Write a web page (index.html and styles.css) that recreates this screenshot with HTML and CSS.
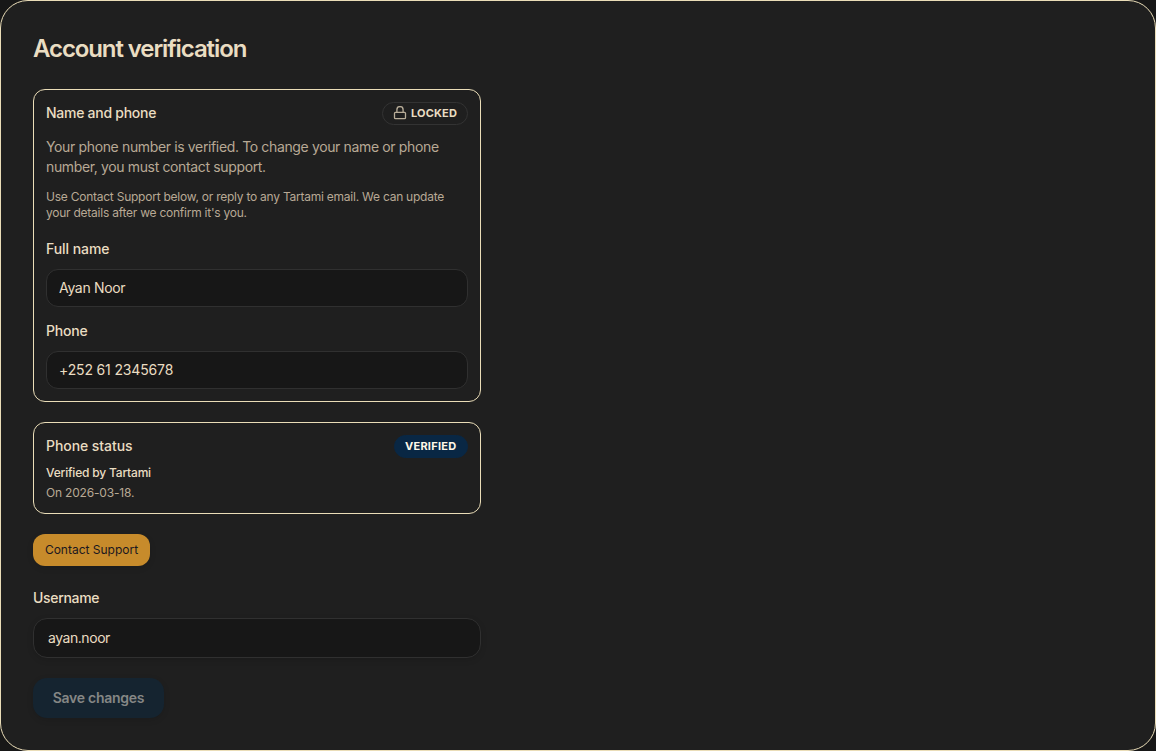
FILE: index.html
```html
<!DOCTYPE html>
<html lang="en">
<head>
    <meta charset="UTF-8">
    <meta name="viewport" content="width=device-width, initial-scale=1.0">
    <title>Account verification</title>
    <link rel="stylesheet" href="styles.css">
</head>
<body>
    <main class="panel">
        <h1>Account verification</h1>

        <form class="account-form">
            <section class="card">
                <div class="card-header">
                    <h2 class="name-title">Name and phone</h2>
                    <span class="badge badge-locked">
                        <svg class="lock-icon" viewBox="0 0 14 14" fill="none" stroke="currentColor" stroke-width="1.3" stroke-linecap="round" stroke-linejoin="round">
                            <rect x="1.5" y="6.3" width="11" height="6.4" rx="1"/>
                            <path d="M3.9 6.2V3.7a3.1 3.1 0 0 1 6.2 0v2.5"/>
                        </svg>
                        LOCKED
                    </span>
                </div>
                <p class="description">Your phone number is verified. To change your name or phone<br>number, you must contact support.</p>
                <p class="hint">Use Contact Support below, or reply to any Tartami email. We can update<br>your details after we confirm it's you.</p>

                <div class="form-group">
                    <label class="label-name" for="fullName">Full name</label>
                    <input type="text" class="input-name" id="fullName" value="Ayan Noor" readonly>
                </div>
                <div class="form-group">
                    <label for="phone">Phone</label>
                    <input type="text" class="input-phone" id="phone" value="+252 61 2345678" readonly>
                </div>
            </section>

            <section class="card">
                <div class="card-header">
                    <h2>Phone status</h2>
                    <span class="badge badge-verified">VERIFIED</span>
                </div>
                <p class="verified-by">Verified by Tartami</p>
                <p class="verified-date">On 2026-03-18.</p>
            </section>

            <button type="button" class="support-button">Contact Support</button>

            <div class="form-group username-group">
                <label class="label-username" for="username">Username</label>
                <input type="text" id="username" value="ayan.noor">
            </div>

            <button type="submit" class="save-button" disabled>Save changes</button>
        </form>
    </main>
</body>
</html>
```
FILE: styles.css
```css
* {
    box-sizing: border-box;
}

body {
    margin: 0;
    background-color: #171717;
    color: #eaddc2;
    font-family: Inter, "Liberation Sans", sans-serif;
    font-size: 14px;
    line-height: 20px;
}

h1, h2, p {
    margin: 0;
}

.panel {
    height: 751px;
    padding: 32px;
    background-color: #1f1f1f;
    border: 1px solid #eaddb8;
    border-radius: 28px;
}

h1 {
    font-size: 24px;
    font-weight: 600;
    line-height: 32px;
    letter-spacing: -1.1px;
}

.account-form {
    display: flex;
    flex-direction: column;
    align-items: flex-start;
    gap: 20px;
    width: 448px;
    margin-top: 24px;
}

.card {
    width: 100%;
    padding: 12px;
    border: 1px solid #eaddb8;
    border-radius: 12px;
}

.card-header {
    display: flex;
    justify-content: space-between;
    align-items: center;
    height: 23px;
}

h2 {
    padding-bottom: 2px;
    font-size: 14px;
    font-weight: 500;
    line-height: 20px;
    letter-spacing: -0.07px;
}

.name-title {
    letter-spacing: -0.27px;
}

.badge {
    display: flex;
    align-items: center;
    height: 23px;
    padding: 0 10px 1px;
    border: 1px solid #333;
    border-radius: 12px;
    font-size: 11px;
    font-weight: 700;
    line-height: 16px;
    letter-spacing: 0.17px;
}

.badge-locked {
    gap: 4px;
    width: 86px;
}

.badge-verified {
    width: 74px;
    background-color: #092744;
    border-color: #092744;
    color: #fff8e8;
    letter-spacing: 0.25px;
}

.lock-icon {
    width: 14px;
    height: 14px;
    flex: none;
    color: #b8ad99;
}

.description {
    margin-top: 12px;
    color: #b8a995;
    letter-spacing: -0.36px;
}

.hint {
    margin-top: 12px;
    color: #b8a995;
    font-size: 12px;
    line-height: 16px;
    letter-spacing: -0.24px;
}

.form-group {
    width: 100%;
    margin-top: 14px;
}

.hint + .form-group {
    margin-top: 18px;
}

label {
    display: block;
    font-weight: 500;
    line-height: 20px;
    letter-spacing: -0.2px;
}

.label-name {
    letter-spacing: -0.06px;
}

.label-username {
    letter-spacing: -0.32px;
}

input {
    display: block;
    width: 100%;
    height: 38px;
    margin-top: 10px;
    padding: 0 12px 2px;
    background-color: #171717;
    border: 1px solid #303030;
    border-radius: 12px;
    color: #eaddc2;
    font-family: inherit;
    font-size: 14px;
    letter-spacing: -0.45px;
    outline: none;
}

.input-name {
    letter-spacing: -0.33px;
}

.input-phone {
    letter-spacing: -0.15px;
}

.verified-by, .verified-date {
    font-size: 12px;
    line-height: 16px;
    letter-spacing: -0.19px;
}

.verified-by {
    margin-top: 7px;
    font-weight: 500;
}

.verified-date {
    margin-top: 4px;
    color: #b8a995;
}

button {
    border: none;
    font-family: inherit;
    box-shadow: 0 2px 6px rgba(0, 0, 0, 0.12);
}

.support-button {
    width: 117px;
    height: 32px;
    padding: 0 0 2px;
    background-color: #c78b2b;
    border-radius: 12px;
    color: #1b1720;
    font-size: 12px;
}

.username-group {
    margin-top: 2px;
}

.username-group input {
    height: 40px;
    padding: 0 14px 2px;
    border-radius: 14px;
    box-shadow: 0 2px 6px rgba(0, 0, 0, 0.12);
}

.save-button {
    width: 131px;
    height: 40px;
    padding: 0 0 2px;
    background-color: #152430;
    border-radius: 14px;
    color: #858785;
    font-size: 14px;
    font-weight: 600;
    letter-spacing: -0.27px;
}
```
